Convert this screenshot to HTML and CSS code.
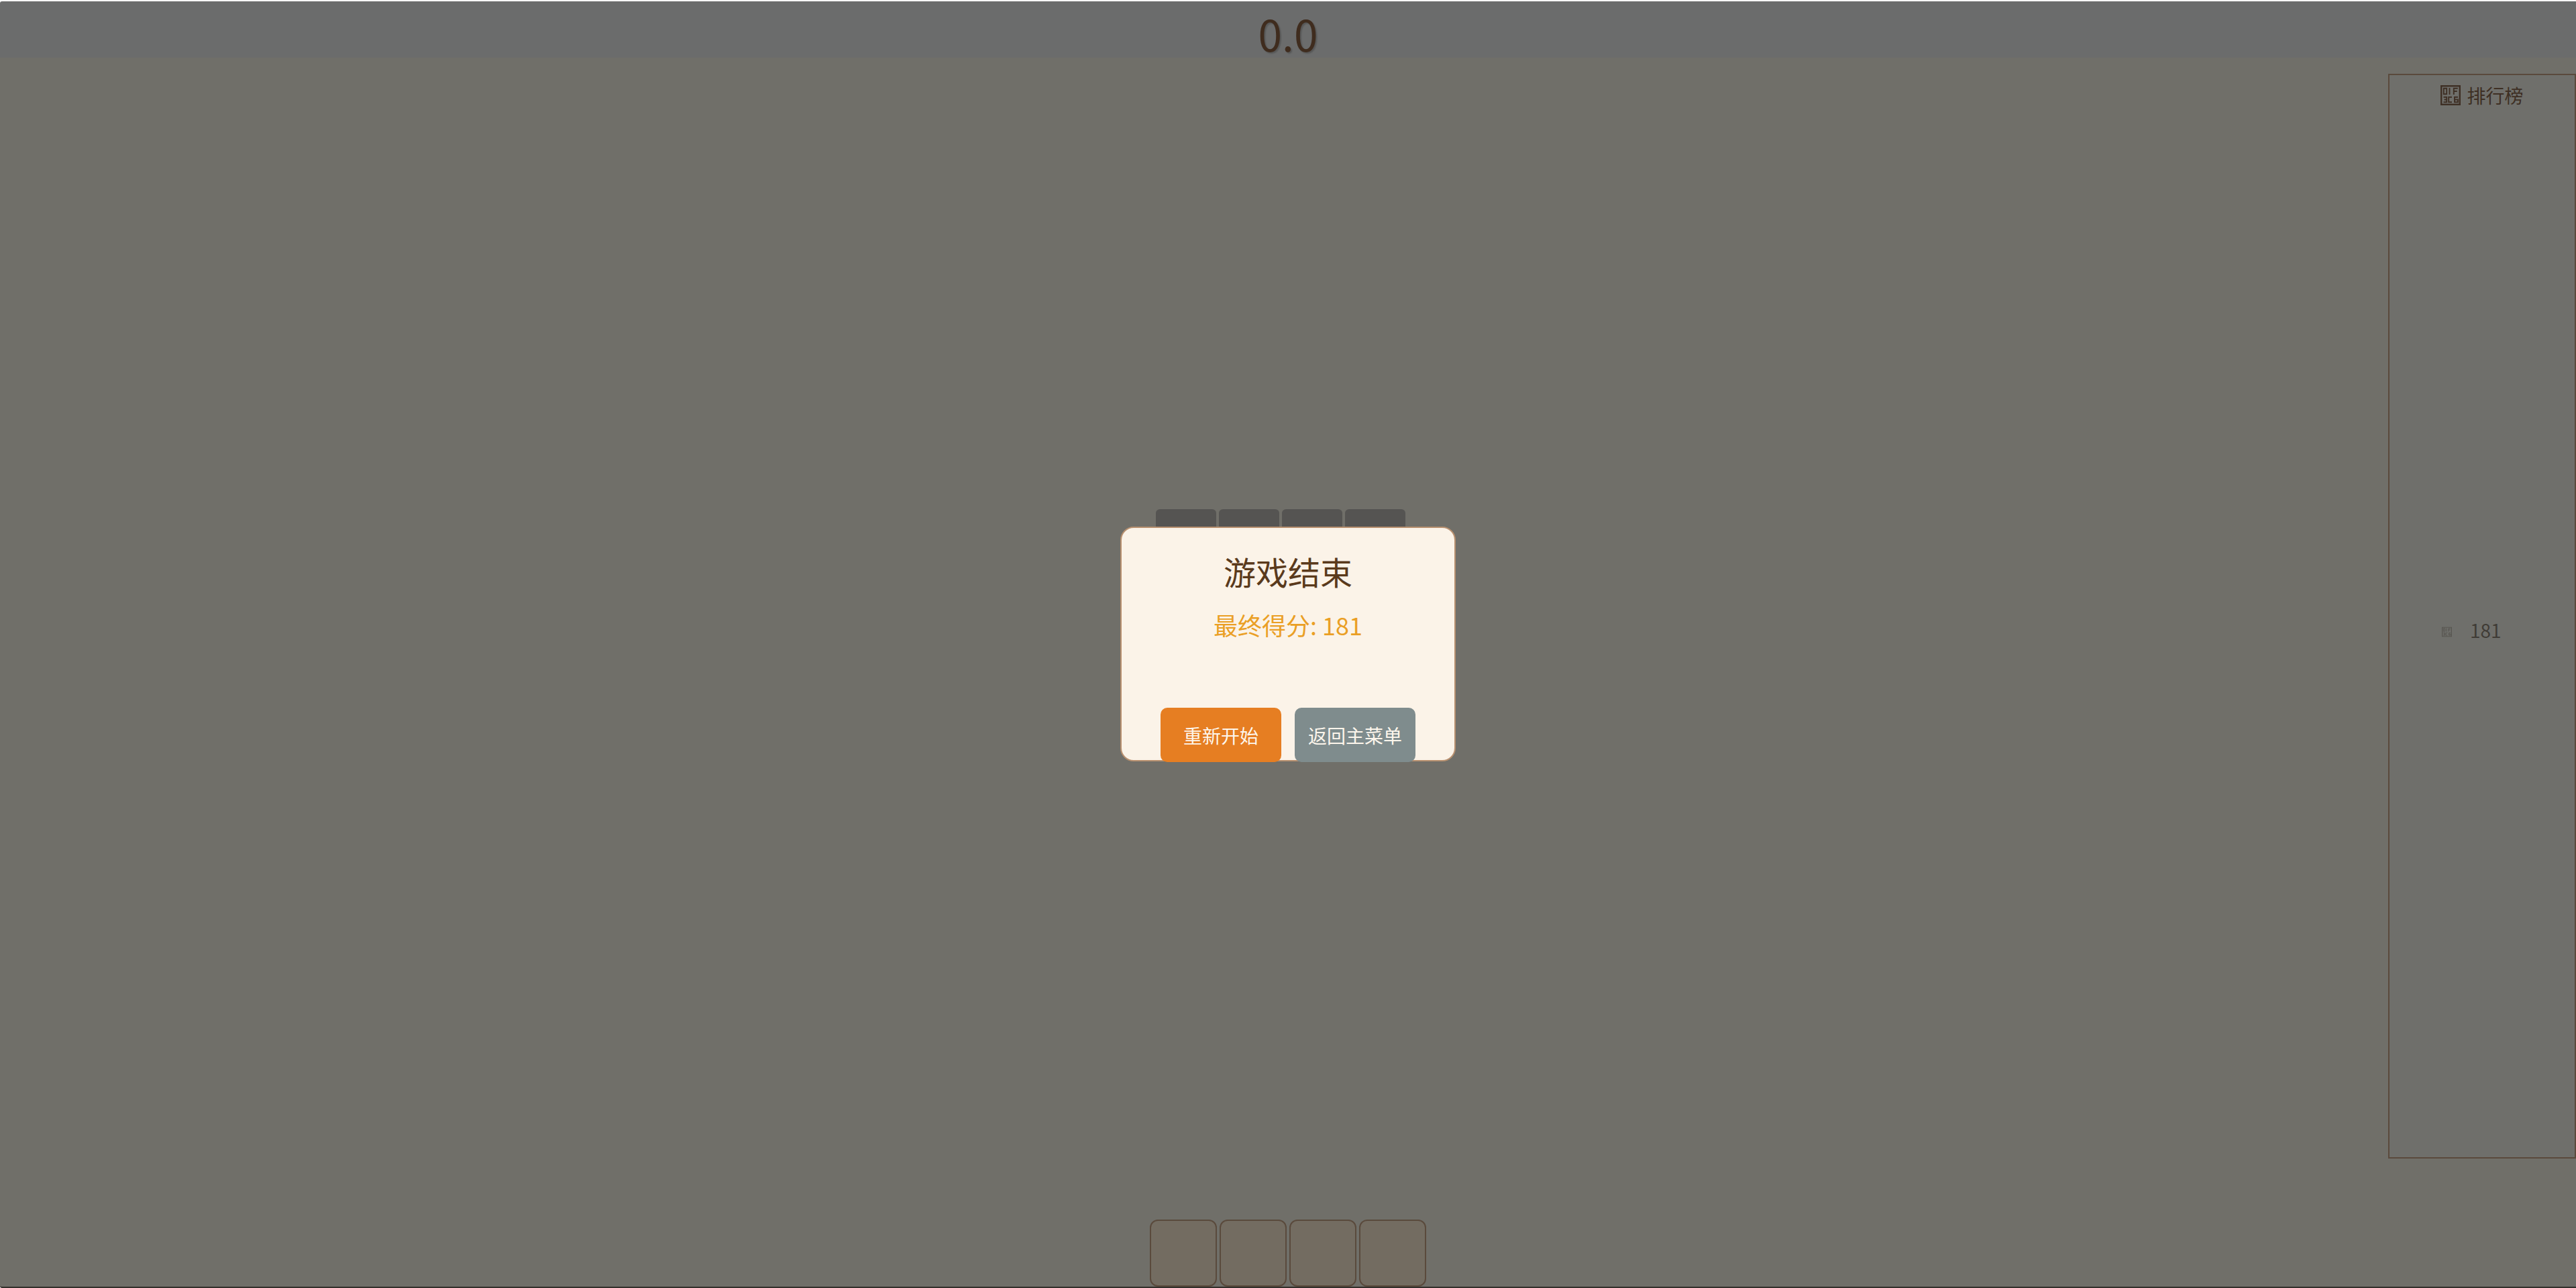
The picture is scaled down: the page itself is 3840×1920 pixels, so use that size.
FILE: index.html
```html
<!DOCTYPE html>
<html lang="zh-CN">
<head>
<meta charset="utf-8">
<title>游戏结束</title>
<link rel="stylesheet" href="styles.css">
</head>
<body>
<div class="game">
  <header class="score-bar"><span class="score">0.0</span></header>
  <main class="field">
    <div class="falling-row">
      <div class="tile"></div><div class="tile"></div><div class="tile"></div><div class="tile"></div>
    </div>
    <div class="keys">
      <div class="key"></div><div class="key"></div><div class="key"></div><div class="key"></div>
    </div>
    <aside class="board">
      <h2 class="board-title">
        <svg class="tofu" viewBox="0 0 30 30" aria-hidden="true">
          <symbol id="tofu-box" viewBox="0 0 30 30">
            <rect x="1.2" y="1.2" width="27.6" height="27.6" fill="none" stroke="currentColor" stroke-width="2.4"/>
            <path fill="none" stroke="currentColor" stroke-width="1.9" d="M4.8 4.8h4.4v8.4h-4.4zM13.5 4v10M19.8 14V4.8h6M19.8 9h5M4.5 17.8h4.7v7.4h-4.7M5.5 21.5h3.7M17 17.8h-4.8v7.4h4.8M26 17.8h-5v7.4h5v-3.7h-5"/>
          </symbol>
          <use href="#tofu-box"/>
        </svg>
        <span>排行榜</span>
      </h2>
      <div class="board-list">
        <div class="board-row">
          <svg class="tofu-small" viewBox="0 0 30 30" aria-hidden="true"><use href="#tofu-box"/></svg>
          <span>181</span>
        </div>
      </div>
    </aside>
  </main>
  <div class="modal">
    <h1 class="modal-title">游戏结束</h1>
    <p class="modal-score">最终得分: 181</p>
    <div class="modal-actions">
      <button class="btn btn-primary">重新开始</button>
      <button class="btn btn-secondary">返回主菜单</button>
    </div>
  </div>
</div>
</body>
</html>
```

FILE: styles.css
```css
* { box-sizing: border-box; }
html, body {
  margin: 0;
  width: 3840px;
  height: 1920px;
  overflow: hidden;
  background: #fff;
}
body {
  font-family: "Noto Sans CJK SC", "Noto Sans", sans-serif;
  color: #3e2c1e;
}
.game {
  position: relative;
  width: 3840px;
  height: 1920px;
  padding-top: 2px;
  display: flex;
  flex-direction: column;
  background: #fff;
}
.score-bar {
  height: 84px;
  flex: none;
  background: #6b6c6c;
  border-top-left-radius: 3px;
  display: flex;
  justify-content: center;
  align-items: center;
}
.score {
  font-size: 64px;
  line-height: 1;
  margin-top: 10px;
  color: #3f2c1e;
  text-shadow: 2px 2px 2px rgba(0, 0, 0, .2);
}
.field {
  flex: 1;
  position: relative;
  background: #706f69;
  border-bottom: 2px solid #33302b;
  border-bottom-left-radius: 3px;
}
.falling-row {
  position: absolute;
  left: 1723px;
  top: 673px;
  display: flex;
  gap: 4px;
}
.tile {
  width: 90px;
  height: 100px;
  border-radius: 6px;
  background: #555452;
}
.keys {
  position: absolute;
  left: 1714px;
  bottom: 0;
  display: flex;
  gap: 4px;
}
.key {
  width: 100px;
  height: 100px;
  border: 2px solid #5a4a3c;
  border-radius: 12px;
  background: #736c61;
}
.board {
  position: absolute;
  right: 0;
  top: 24px;
  width: 280px;
  height: 1617px;
  display: flex;
  flex-direction: column;
  border: 2px solid #5a4a3c;
  background: #6f6f6b;
}
.board-title {
  margin: 10px 0 0;
  display: flex;
  justify-content: center;
  align-items: center;
  gap: 9px;
  font-size: 28px;
  line-height: 40px;
  font-weight: 400;
  color: #3e2f24;
}
.tofu {
  width: 30px;
  height: 30px;
  flex: none;
}
.board-list {
  flex: 1;
  padding: 0 0 10px 78px;
  display: flex;
  flex-direction: column;
  justify-content: center;
}
.board-row {
  display: flex;
  align-items: center;
  gap: 27px;
  font-size: 28px;
  line-height: 40px;
  color: #403c36;
}
.tofu-small {
  width: 15px;
  height: 16px;
  flex: none;
  margin-top: 6px;
  opacity: .5;
}
.modal {
  position: absolute;
  left: 1670px;
  top: 785px;
  width: 500px;
  height: 350px;
  padding: 33px 58px 0;
  display: flex;
  flex-direction: column;
  align-items: center;
  border: 2px solid #b8906f;
  border-radius: 20px;
  background: #fbf3e8;
}
.modal-title {
  margin: 0;
  font-size: 48px;
  line-height: 62px;
  font-weight: 400;
  color: #5a3a1c;
}
.modal-score {
  margin: 24px 0 0;
  font-size: 36px;
  line-height: 50px;
  color: #ea9f25;
}
.modal-actions {
  position: absolute;
  left: 58px;
  top: 268px;
  display: flex;
  gap: 20px;
}
.btn {
  width: 180px;
  height: 81px;
  border: 0;
  border-radius: 10px;
  font-family: inherit;
  font-size: 28px;
  color: #fdf6ec;
  padding: 0;
}
.btn-primary { background: #e67e22; }
.btn-secondary { background: #7f8c8d; }
```
